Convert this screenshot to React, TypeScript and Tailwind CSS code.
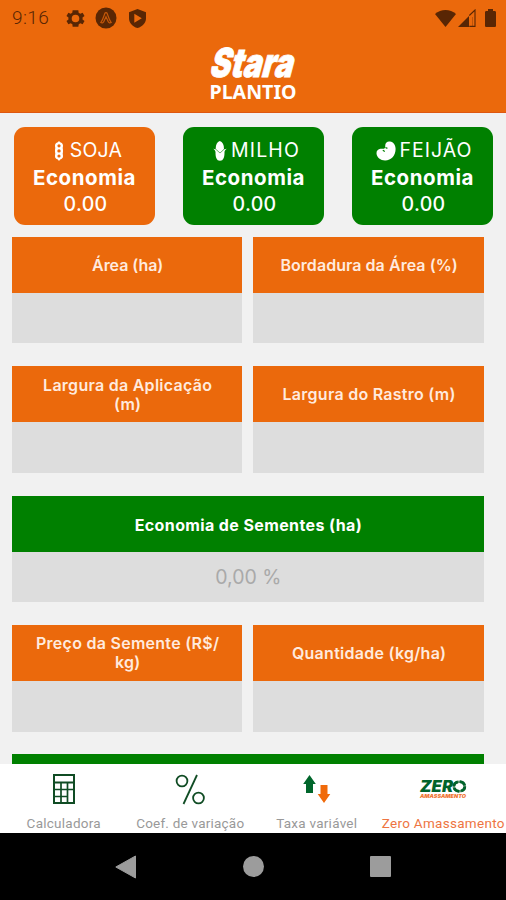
import type { ReactNode } from "react";
import clsx from "clsx";

interface Culture {
  name: string;
  value: string;
  icon: ReactNode;
  active?: boolean;
  rowClass: string;
  nameClass: string;
}

interface Field {
  label: string;
  labelClass?: string;
}

const SoyIcon = () => (
  <svg width="10" height="20" viewBox="0 0 10 20">
    <path
      d="M5 0l1.200 1.300C8 1.700 9 3 9 4.500c0 1-.1 1.700-.3 2.400.2.800.3 1.800.3 2.900s-.1 2.100-.3 2.900c.2.700.3 1.500.3 2.500 0 1.600-1 2.900-2.800 3.300L5 20l-1.200-1.500C2 18.100 1 16.800 1 15.200c0-1 .1-1.800.3-2.500C1.100 11.900 1 10.900 1 9.800s.1-2.100.3-2.900C1.100 6.200 1 5.500 1 4.500 1 3 2 1.700 3.800 1.300Z"
      fill="white"
    />
    <g fill="#eb690c">
      <circle cx="5" cy="4.800" r="1.600" />
      <circle cx="5" cy="9.900" r="1.700" />
      <circle cx="5" cy="15" r="1.600" />
    </g>
  </svg>
);

const CornIcon = () => (
  <svg width="14" height="20" viewBox="0 0 14 20" fill="white">
    <path d="M6.800 0C9.600.8 11 3.600 11 8L7 12 2.700 8C2.700 3.600 4 .8 6.800 0Z" />
    <path d="M.3 7.800L3.500 8.500 7 11.800l3.500-3.300 3.200-.7c-1.300.9-2 1.800-2.200 3.200C11.600 16 10.500 19.800 7 19.800S2.400 16 2.500 11C2.300 9.600 1.600 8.700.3 7.800Z" />
    <path d="M2.800 8.300l4.200 3.700 4.200-3.700" fill="none" stroke="#008000" strokeWidth=".5" />
  </svg>
);

const BeanIcon = () => (
  <svg width="20" height="20" viewBox="0 0 20 20">
    <path d="M14 .5c-2.500-.5-4.400.9-4.700 3.300-.1 1.600.1 2.600-.6 3.500-.9.900-2.300.4-4.200.5C2.200 8 .3 9.800.5 12.400c.4 4 4 7 8.600 7C15.300 19.400 19.600 14.500 19.600 8 19.600 4 17.500 1 14 .5Z" fill="white" />
    <path d="M6.800 9.200l2 1.200M9.400 6.500l2 .9" stroke="#008000" strokeWidth="1.200" fill="none" />
  </svg>
);

const CULTURES: Culture[] = [
  { name: "SOJA", value: "0.00", icon: <SoyIcon />, active: true, rowClass: "pl-[7px]", nameClass: "ml-[6px] tracking-[0.2px]" },
  { name: "MILHO", value: "0.00", icon: <CornIcon />, rowClass: "pl-[6px]", nameClass: "ml-[4px] tracking-[1.1px]" },
  { name: "FEIJÃO", value: "0.00", icon: <BeanIcon />, rowClass: "pl-[3px]", nameClass: "ml-[4px] tracking-[1px]" },
];

function StatusBar() {
  return (
    <div className="flex h-9 items-center justify-between pl-3 pr-2.5 text-[#592604]">
      <div className="flex items-center">
        <span className="w-[40px] font-[Roboto] text-[19px] font-light tracking-[0.4px]">9:16</span>
        <svg className="ml-[14px]" width="19" height="19" viewBox="2 2 20 20" fill="currentColor">
          <path fillRule="evenodd" d="M19.400 13a7.500 7.500 0 0 0 0-2l2.100-1.600-2-3.500-2.500 1a7.300 7.300 0 0 0-1.700-1L15 3.200h-6l-.4 2.700a7.300 7.300 0 0 0-1.700 1l-2.400-1-2 3.500L4.600 11a7.500 7.500 0 0 0 0 2l-2.100 1.600 2 3.500 2.500-1c.5.4 1.100.7 1.700 1l.3 2.700h6l.4-2.700c.6-.3 1.200-.6 1.700-1l2.400 1 2-3.500zM12 16a4 4 0 1 1 0-8 4 4 0 0 1 0 8z" />
        </svg>
        <svg className="ml-[10px]" width="22" height="22" viewBox="0 0 22 22">
          <circle cx="11" cy="11" r="10.500" fill="currentColor" />
          <path d="M5.800 15.500c2-2.500 3-6 4-9 .4-1.200 2-1.200 2.400 0 1 3 2 6.500 4 9-1.500.9-2.600.1-3.300-1.500L11 9.800 9.100 14c-.7 1.600-1.800 2.400-3.300 1.500Z" fill="none" stroke="#c4580a" strokeWidth="1.200" />
        </svg>
        <svg className="ml-[12px]" width="17" height="19" viewBox="0 0 17 19">
          <path fillRule="evenodd" d="M8.500 0L17 3.200v6c0 4.500-3.400 8.300-8.500 9.800C3.400 17.500 0 13.700 0 9.200v-6ZM5.300 4.800v9l7.500-4.500Z" fill="currentColor" />
        </svg>
      </div>
      <div className="flex items-center">
        <svg width="21" height="17" viewBox="0 0 21 17" fill="currentColor">
          <path d="M0 4C6-1.300 15-1.300 21 4L10.500 17Z" />
        </svg>
        <svg className="ml-[2px]" width="18" height="18" viewBox="0 0 18 18" fill="currentColor">
          <path d="M0 18L11 7v11Z" />
          <path d="M11.300 6.500L17 1v16.400h-5.700" fill="none" stroke="currentColor" strokeWidth="1.100" />
          <path d="M14.500 8v9.500" stroke="currentColor" strokeWidth="1" opacity=".3" />
        </svg>
        <svg className="ml-[9px]" width="11" height="18" viewBox="0 0 11 18" fill="currentColor">
          <path d="M3 0h5v2h1.700c.7 0 1.300.6 1.300 1.300v13.400c0 .7-.6 1.300-1.300 1.300H1.300C.6 18 0 17.400 0 16.700V3.300C0 2.600.6 2 1.300 2H3Z" />
        </svg>
      </div>
    </div>
  );
}

function Header() {
  return (
    <header className="h-[112.500px] shrink-0 border-b border-[#de5710] bg-[#eb690c]">
      <StatusBar />
      <div className="flex justify-center">
        <svg width="92" height="68" viewBox="0 0 92 68" fill="white" className="overflow-visible">
          <text
            x="2"
            y="41"
            fontFamily="Inter"
            fontSize="40"
            fontWeight="900"
            stroke="white"
            strokeWidth=".8"
            textLength="83"
            lengthAdjust="spacingAndGlyphs"
            transform="translate(10.500 0) skewX(-15)"
          >
            Stara
          </text>
          <text x="2.500" y="63" fontFamily="Noto Sans" fontWeight="700" fontSize="20" textLength="87" lengthAdjust="spacingAndGlyphs">
            PLANTIO
          </text>
        </svg>
      </div>
    </header>
  );
}

function CultureCard({ name, value, icon, active, rowClass, nameClass }: Culture) {
  return (
    <div
      className={clsx(
        "flex h-[98px] w-[141px] flex-col items-center rounded-[11px] pt-[10px] text-[20px] leading-[27px] text-white",
        active ? "bg-[#eb690c]" : "bg-[#008000]"
      )}
    >
      <div className={clsx("flex items-center", rowClass)}>
        {icon}
        <span className={clsx("text-[19.500px]", nameClass)}>{name}</span>
      </div>
      <p className="text-[20.500px] font-bold tracking-[0.550px]">Economia</p>
      <p className="pl-0.5 text-[19.500px] font-medium tracking-[0.300px]">{value}</p>
    </div>
  );
}

function FieldBox({ label, labelClass = "tracking-[0.270px]" }: Field) {
  return (
    <div className="flex h-[106.600px] flex-col">
      <div className="flex h-14 items-center justify-center bg-[#eb690c] pl-px pt-px text-center text-[16px] font-semibold leading-[19px] text-[#ffeade]">
        <span className={clsx("whitespace-pre-line", labelClass)}>{label}</span>
      </div>
      <div className="flex-1 bg-[#dddddd]" />
    </div>
  );
}

function Tab({ label, active, labelClass, children }: { label: string; active?: boolean; labelClass?: string; children: ReactNode }) {
  return (
    <div className="flex flex-col items-center pl-px">
      <div className="flex h-[50px] items-center">{children}</div>
      <span
        className={clsx(
          "whitespace-nowrap font-[Roboto] text-[13.500px] leading-[19px]",
          active ? "text-[#ee7542]" : "text-[#999999]",
          labelClass
        )}
      >
        {label}
      </span>
    </div>
  );
}

function TabBar() {
  return (
    <nav className="grid h-[69px] shrink-0 grid-cols-4 bg-white">
      <Tab label="Calculadora" labelClass="tracking-[0.250px]">
        <svg width="22" height="30" viewBox="0 0 22 30" fill="none" stroke="#104c24">
          <path d="M1 1h20v28H1ZM1 8.500h20" strokeWidth="2" />
          <path d="M1 15.500h20M1 22.500h13M8 8.500V29M14.500 8.500V29" strokeWidth="1.700" />
        </svg>
      </Tab>
      <Tab label="Coef. de variação" labelClass="tracking-[0.220px]">
        <svg width="30" height="31" viewBox="0 0 30 31" fill="none" stroke="#104c24" strokeWidth="1.800">
          <circle cx="7" cy="7" r="5.400" />
          <circle cx="23.500" cy="24" r="5.400" />
          <path d="M22 1L8.500 30" />
        </svg>
      </Tab>
      <Tab label="Taxa variável" labelClass="tracking-[0.250px]">
        <svg width="28" height="28" viewBox="0 0 28 28">
          <path d="M6.500 0l6.300 9H10v9H3V9H.2Z" fill="#00662b" />
          <path d="M17.500 10h7v9h2.800L21 28l-6.300-9h2.800Z" fill="#f06a0a" />
        </svg>
      </Tab>
      <Tab label="Zero Amassamento" active labelClass="tracking-[0.300px]">
        <svg width="48" height="20" viewBox="0 0 48 20" className="overflow-visible">
          <g fontFamily="Inter" fontStyle="italic" fontWeight="900">
            <text x="1" y="13" fontSize="15.500" fill="#00632b" textLength="33" lengthAdjust="spacingAndGlyphs">ZER</text>
            <text x="1" y="18.500" fontSize="5" fill="#f07532" textLength="46" lengthAdjust="spacingAndGlyphs">AMASSAMENTO</text>
          </g>
          <ellipse cx="40.300" cy="7.500" rx="5.500" ry="4.800" fill="none" stroke="#5d9171" strokeWidth="2.600" />
          <ellipse cx="40.300" cy="7.500" rx="5.500" ry="4.800" fill="none" stroke="#00632b" strokeWidth="2.800" strokeDasharray="6 2.100" />
        </svg>
      </Tab>
    </nav>
  );
}

function SystemNav() {
  return (
    <div className="grid h-[67px] shrink-0 grid-cols-[1fr_22px_1fr] items-center bg-black">
      <svg className="ml-[115px]" width="21" height="24" viewBox="0 0 21 24" fill="#9c9c9c">
        <path d="M20.500 1v22L.8 12Z" stroke="#9c9c9c" strokeLinejoin="round" />
      </svg>
      <div className="ml-px h-[21px] w-[21px] rounded-full bg-[#9c9c9c]" />
      <div className="ml-[106px] h-[21px] w-[21px] rounded-[1px] bg-[#9c9c9c]" />
    </div>
  );
}

export default function App() {
  return (
    <div className="flex h-[900px] w-[506px] flex-col overflow-hidden bg-[#f1f1f1] font-[Inter,sans-serif]">
      <Header />
      <main className="min-h-0 flex-1 overflow-hidden">
        <div className="flex justify-between pl-[14px] pr-[13px] pt-[14.500px]">
          {CULTURES.map((culture) => (
            <CultureCard key={culture.name} {...culture} />
          ))}
        </div>

        <div className="mt-[11.800px] grid grid-cols-[230.300px_230.300px] gap-x-[11.200px] gap-y-[22.800px] pl-3">
          <FieldBox label="Área (ha)" labelClass="tracking-[-0.050px]" />
          <FieldBox label="Bordadura da Área (%)" labelClass="tracking-[0.050px]" />
          <FieldBox label={"Largura da Aplicação\n(m)"} />
          <FieldBox label="Largura do Rastro (m)" />
          <div className="col-span-2 h-[106.600px]">
            <div className="flex h-14 items-center justify-center bg-[#008000] pl-px pt-0.5 text-[16px] font-bold text-white">
              <span className="tracking-[0.380px]">Economia de Sementes (ha)</span>
            </div>
            <div className="flex h-[50.600px] items-center justify-center bg-[#dddddd] pl-px pt-0.5 text-[19.500px] text-[#a9a9a9]">0,00 %</div>
          </div>
          <FieldBox label={"Preço da Semente (R$/\nkg)"} />
          <FieldBox label="Quantidade (kg/ha)" />
          <div className="col-span-2 h-14 bg-[#008000]" />
        </div>
      </main>
      <TabBar />
      <SystemNav />
    </div>
  );
}
